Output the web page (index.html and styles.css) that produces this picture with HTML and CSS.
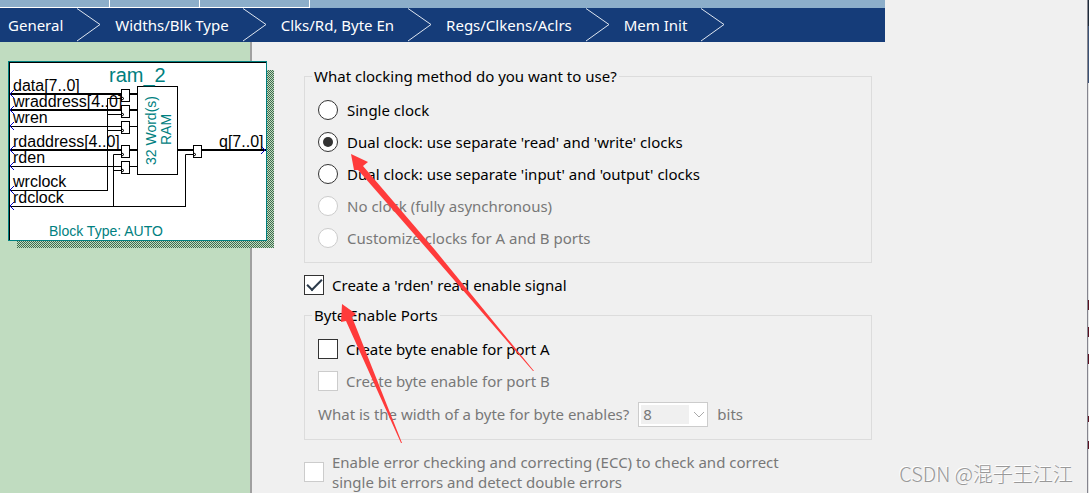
FILE: index.html
```html
<!DOCTYPE html>
<html lang="en">
<head>
    <meta charset="UTF-8">
    <meta name="viewport" content="width=device-width, initial-scale=1.0">
    <title>RAM: 2-PORT</title>
    <link rel="stylesheet" href="styles.css">
</head>
<body>
    <div class="window">
        <header class="wizard-header">
            <div class="tabs">
                <span class="tab tab-wide"></span>
                <span class="tab"></span>
                <span class="tab tab-wide"></span>
            </div>
            <nav class="steps">
                <a href="#general">General</a>
                <svg class="chevron" viewBox="0 0 24 34"><path d="M0 0.5L23 16.5L0 33"/></svg>
                <a href="#widths">Widths/Blk Type</a>
                <svg class="chevron" viewBox="0 0 24 34"><path d="M0 0.5L23 16.5L0 33"/></svg>
                <a href="#clks">Clks/Rd, Byte En</a>
                <svg class="chevron" viewBox="0 0 24 34"><path d="M0 0.5L23 16.5L0 33"/></svg>
                <a href="#regs">Regs/Clkens/Aclrs</a>
                <svg class="chevron" viewBox="0 0 24 34"><path d="M0 0.5L23 16.5L0 33"/></svg>
                <a href="#mem">Mem Init</a>
                <svg class="chevron" viewBox="0 0 24 34"><path d="M0 0.5L23 16.5L0 33"/></svg>
            </nav>
        </header>

        <div class="body">
            <aside class="preview">
                <svg class="symbol" viewBox="8 61 267 188" width="267" height="188">
                    <defs>
                        <pattern id="dither" width="2" height="2" patternUnits="userSpaceOnUse">
                            <rect width="1" height="1" fill="#3f6b4f"/>
                            <rect x="1" y="1" width="1" height="1" fill="#3f6b4f"/>
                        </pattern>
                    </defs>
                    <rect x="17" y="70" width="257" height="178" fill="#c0dcc0"/>
                    <rect x="17" y="70" width="257" height="178" fill="url(#dither)"/>
                    <rect x="8.5" y="61.5" width="258" height="179" fill="#fff" stroke="#008080"/>
                    <path class="wire" d="M9 62.5H266M9.5 62V240"/>

                    <!-- buses -->
                    <path class="bus" d="M10 94H137M10 110H137M10 150H137M178 150H266"/>
                    <!-- single wires -->
                    <path class="wire" d="M10 126.5H137M10 166.5H137M10 190.5H107M10 206.5H185"/>
                    <!-- clocks -->
                    <path class="wire" d="M107.5 191V98.5H122M107.5 114.5H122M107.5 130.5H122"/>
                    <path class="wire" d="M113.5 207V154.5H122M113.5 170.5H122M185.5 207V154.5H194"/>

                    <!-- registers -->
                    <g class="reg">
                        <rect x="121.5" y="89.5" width="8" height="12"/>
                        <rect x="121.5" y="105.5" width="8" height="12"/>
                        <rect x="121.5" y="121.5" width="8" height="12"/>
                        <rect x="121.5" y="145.5" width="8" height="12"/>
                        <rect x="121.5" y="161.5" width="8" height="12"/>
                        <rect x="193.5" y="145.5" width="8" height="12"/>
                        <rect x="137.5" y="86.5" width="40" height="88"/>
                    </g>
                    <path class="wire" d="M122 97l2 1.5l-2 1.5M122 113l2 1.5l-2 1.5M122 129l2 1.5l-2 1.5M122 153l2 1.5l-2 1.5M122 169l2 1.5l-2 1.5M194 153l2 1.5l-2 1.5"/>

                    <!-- pins -->
                    <path class="pin" d="M14 90l-4 4l4 4M14 106l-4 4l4 4M14 122l-4 4l4 4M14 146l-4 4l4 4M14 162l-4 4l4 4M14 186l-4 4l4 4M14 202l-4 4l4 4M261 146l4 4l-4 4"/>

                    <g class="port">
                        <text x="13" y="91">data[7..0]</text>
                        <text x="13" y="107">wraddress[4..0]</text>
                        <text x="13" y="123">wren</text>
                        <text x="13" y="147">rdaddress[4..0]</text>
                        <text x="13" y="163">rden</text>
                        <text x="13" y="187">wrclock</text>
                        <text x="13" y="203">rdclock</text>
                        <text x="219" y="147">q[7..0]</text>
                    </g>
                    <text class="name" x="109" y="82">ram_2</text>
                    <text class="note" transform="translate(156 165) rotate(-90)">32 Word(s)</text>
                    <text class="note" transform="translate(171 145) rotate(-90)">RAM</text>
                    <text class="note" x="49" y="236">Block Type: AUTO</text>
                </svg>
            </aside>

            <main class="form">
                <fieldset class="group">
                    <legend>What clocking method do you want to use?</legend>
                    <label class="option"><input type="radio" name="clock">Single clock</label>
                    <label class="option"><input type="radio" name="clock" checked>Dual clock: use separate 'read' and 'write' clocks</label>
                    <label class="option"><input type="radio" name="clock">Dual clock: use separate 'input' and 'output' clocks</label>
                    <label class="option off"><input type="radio" name="clock" disabled>No clock (fully asynchronous)</label>
                    <label class="option off"><input type="radio" name="clock" disabled>Customize clocks for A and B ports</label>
                </fieldset>

                <label class="option check rden"><input type="checkbox" checked>Create a 'rden' read enable signal</label>

                <fieldset class="group">
                    <legend>Byte Enable Ports</legend>
                    <label class="option check"><input type="checkbox">Create byte enable for port A</label>
                    <label class="option check off"><input type="checkbox" disabled>Create byte enable for port B</label>
                    <div class="byte-width off">
                        <label for="byteWidth">What is the width of a byte for byte enables?</label>
                        <span class="select">
                            <select id="byteWidth" disabled><option>8</option></select>
                            <svg viewBox="0 0 12 8"><path d="M1 1L6 6L11 1"/></svg>
                        </span>
                        <span>bits</span>
                    </div>
                </fieldset>

                <label class="option check off ecc"><input type="checkbox" disabled><span>Enable error checking and correcting (ECC) to check and correct<br>single bit errors and detect double errors</span></label>
            </main>
        </div>

        <!-- tutorial arrows -->
        <svg class="arrows" viewBox="0 0 540 450" width="540" height="450">
            <path d="M351 154L368 162L363 166L435 250L534 371L533 371L428 250L358 170L354 170Z"/>
            <path d="M342 304L356 314L352 317L402 443L401 443L346 321L341 322Z"/>
        </svg>
        <div class="watermark">CSDN @混子王江江</div>
    </div>
    <div class="behind"></div>
</body>
</html>
```
FILE: styles.css
```css
* {
    box-sizing: border-box;
}
body {
    margin: 0;
    display: flex;
    min-height: 100vh;
    background: #f0f0f0;
    color: #000;
    font: 15px/20px "Noto Sans", sans-serif;
}
.window {
    position: relative;
    display: flex;
    flex-direction: column;
    flex: 1;
    border-right: 1px solid #85858f;
}
/* slice of the window behind */
.behind {
    width: 1px;
    background:
        linear-gradient(#5a1020, #5a1020) 0 300px / 1px 10px no-repeat,
        linear-gradient(#5a1020, #5a1020) 0 327px / 1px 10px no-repeat,
        linear-gradient(#5a1020, #5a1020) 0 354px / 1px 10px no-repeat,
        linear-gradient(#5a1020, #5a1020) 0 416px / 1px 6px no-repeat,
        linear-gradient(#5a1020, #5a1020) 0 441px / 1px 8px no-repeat,
        linear-gradient(#1d2b3a 26px, #3b5275 26px, #3b5275 83px, #e4e4e4 83px);
}

/* header */
.wizard-header {
    max-width: 885px;
    background: #153c79;
}
.tabs {
    display: flex;
    height: 8px;
    background: #8caeca;
}
.tab {
    width: 90px;
    border-right: 1px solid #fff;
    border-bottom: 1px solid #fff;
}
.tab-wide {
    width: 110px;
}
.steps {
    display: flex;
    align-items: center;
    gap: 14px;
    height: 34px;
    padding-left: 8px;
}
.steps a {
    color: #fff;
    text-decoration: none;
    white-space: nowrap;
}
.chevron {
    flex: none;
    width: 24px;
    height: 34px;
    fill: none;
    stroke: #dfe6f0;
}

/* block symbol */
.body {
    display: flex;
    flex: 1;
}
.preview {
    flex: none;
    width: 252px;
    padding: 19px 0 0 8px;
    background: #c0dcc0;
    border-right: 2px solid #a0a0a0;
}
.symbol {
    position: relative;
    display: block;
    font-family: "Liberation Sans", Arial, sans-serif;
}
.wire, .bus, .reg {
    fill: none;
    stroke: #000;
}
.bus {
    stroke-width: 2;
}
.reg {
    fill: #fff;
}
.pin {
    fill: none;
    stroke: #0000c0;
}
.port {
    font-size: 16px;
}
.name {
    font-size: 20px;
    fill: #008080;
}
.note {
    font-size: 14px;
    fill: #008080;
}

/* options */
.form {
    flex: 1;
    max-width: 620px;
    padding: 24px 0 0 52px;
}
.group {
    margin: 0;
    padding: 8px 13px 8px;
    border: 1px solid #dcdcdc;
}
legend {
    margin-left: -6px;
    padding: 0 2px;
}
.option {
    display: flex;
    align-items: center;
    gap: 9px;
    height: 32px;
}
.check {
    gap: 8px;
}
.off {
    color: #787878;
}
input {
    appearance: none;
    display: grid;
    place-items: center;
    flex: none;
    width: 20px;
    height: 20px;
    margin: 0;
    background: #fff;
    border: 1px solid #333;
}
input:disabled {
    border-color: #ccc;
}
input[type="radio"] {
    border-radius: 50%;
}
input[type="radio"]:checked::before {
    content: "";
    width: 10px;
    height: 10px;
    border-radius: 50%;
    background: #333;
}
input[type="checkbox"]:checked::before {
    content: "";
    width: 13px;
    height: 6px;
    margin-top: -4px;
    border: solid #2b3a4a;
    border-width: 0 0 2px 2px;
    transform: rotate(-45deg);
}
.rden {
    margin: 6px 0 4px;
}
.byte-width {
    display: flex;
    align-items: center;
    gap: 9px;
    height: 34px;
}
.select {
    position: relative;
}
.select select {
    appearance: none;
    display: block;
    width: 70px;
    height: 25px;
    padding: 0 4px;
    font: inherit;
    color: #787878;
    opacity: 1;
    background: linear-gradient(#f0f0f0, #f0f0f0) 2px 2px / 48px 19px no-repeat #fff;
    border: 1px solid #ccc;
    border-radius: 0;
}
.select svg {
    position: absolute;
    right: 3px;
    top: 9px;
    width: 12px;
    height: 8px;
    fill: none;
    stroke: #aaa;
}
.ecc {
    height: auto;
    margin-top: 12px;
}

.arrows {
    position: absolute;
    left: 0;
    top: 0;
    fill: #ff3b3b;
    pointer-events: none;
}
.watermark {
    position: absolute;
    right: 14px;
    bottom: 5px;
    font: 300 20px/28px "Noto Sans CJK SC", sans-serif;
    color: #999;
    text-shadow: -1px -1px #fff;
}
```
